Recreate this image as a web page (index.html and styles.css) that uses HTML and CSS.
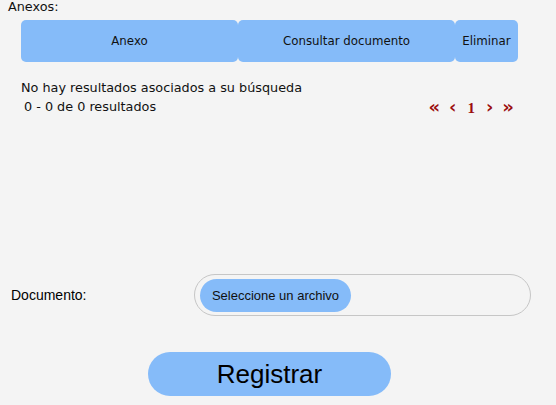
FILE: index.html
```html
<!DOCTYPE html>
<html lang="es">
<head>
  <meta charset="UTF-8">
  <title>Anexos</title>
  <link rel="stylesheet" href="styles.css">
</head>
<body>
  <div class="anexos">
    <div class="title">Anexos:</div>
    <div class="grid-head">
      <div class="col col-anexo">Anexo</div>
      <div class="col col-consultar">Consultar documento</div>
      <div class="col col-eliminar">Eliminar</div>
    </div>
    <div class="results">
      <div class="empty">No hay resultados asociados a su búsqueda</div>
      <div class="pager-row">
        <span class="count">0 - 0 de 0 resultados</span>
        <span class="pager">
          <span class="arrow">«</span>
          <span class="arrow">‹</span>
          <span class="page">1</span>
          <span class="arrow">›</span>
          <span class="arrow">»</span>
        </span>
      </div>
    </div>
  </div>

  <div class="doc-row">
    <label class="doc-label">Documento:</label>
    <div class="file-box">
      <span class="file-btn">Seleccione un archivo</span>
    </div>
  </div>

  <div class="actions">
    <button class="btn-registrar">Registrar</button>
  </div>
</body>
</html>
```

FILE: styles.css
```css
body {
  margin: 0;
  padding: 0 0 0 8px;
  background-color: #f4f4f4;
  color: #111;
  font-family: 'DejaVu Sans', Verdana, sans-serif;
  font-size: 12.8px;
  width: 548px;
  height: 405px;
  overflow: hidden;
}
.anexos {
  display: flex;
  flex-direction: column;
}
.title {
  font-size: 12.8px;
  line-height: 14px;
  margin-top: 0;
}
.grid-head {
  display: flex;
  margin: 6px 0 0 13px;
  width: 497px;
  height: 42px;
}
.col {
  display: flex;
  align-items: center;
  justify-content: center;
  background-color: #85bbf9;
  border-radius: 5px;
  font-size: 11.8px;
}
.col-anexo {
  width: 217px;
}
.col-consultar {
  width: 217px;
}
.col-eliminar {
  width: 63px;
}
.results {
  margin: 17px 0 0 13px;
  width: 497px;
}
.empty {
  line-height: 18px;
}
.pager-row {
  display: flex;
  justify-content: space-between;
  align-items: center;
  line-height: 18px;
}
.count {
  padding-left: 3px;
}
.pager {
  display: flex;
  align-items: center;
  gap: 9px;
  color: #9b0d0d;
  font-weight: bold;
  margin-top: 2px;
  padding-right: 4px;
}
.arrow {
  font-size: 18px;
  line-height: 18px;
  margin-top: -2px;
}
.page {
  font-family: 'Liberation Serif', serif;
  font-size: 15px;
  margin: 0 2px;
}
.doc-row {
  display: flex;
  align-items: center;
  margin-top: 157px;
  height: 42px;
}
.doc-label {
  font-family: 'Liberation Sans', Arial, sans-serif;
  font-size: 14px;
  color: #000;
  width: 183px;
  padding-left: 3px;
}
.file-box {
  display: flex;
  align-items: center;
  box-sizing: border-box;
  width: 337px;
  height: 42px;
  border: 1px solid #c6c6c6;
  border-radius: 21px;
  padding: 0 5px;
}
.file-btn {
  display: flex;
  align-items: center;
  justify-content: center;
  width: 151px;
  height: 33px;
  border-radius: 17px;
  background-color: #85bbf9;
  font-family: 'Liberation Sans', Arial, sans-serif;
  font-size: 13px;
  color: #111;
}
.actions {
  margin: 36px 0 0 140px;
}
.btn-registrar {
  width: 243px;
  height: 44px;
  border: none;
  border-radius: 22px;
  background-color: #85bbf9;
  font-family: 'Liberation Sans', Arial, sans-serif;
  font-size: 26px;
  color: #000;
  padding: 0;
}
```
